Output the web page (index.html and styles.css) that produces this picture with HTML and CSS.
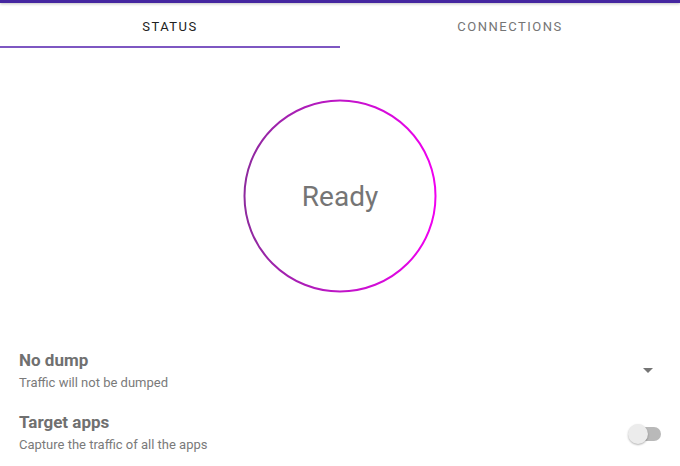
FILE: index.html
```html
<!DOCTYPE html>
<html lang="en">
<head>
    <meta charset="UTF-8">
    <meta name="viewport" content="width=device-width, initial-scale=1.0">
    <title>Status</title>
    <link rel="stylesheet" href="styles.css">
</head>
<body>
    <div class="topbar"></div>
    <nav class="tabs">
        <div class="tab active">STATUS</div>
        <div class="tab">CONNECTIONS</div>
    </nav>
    <main>
        <div class="status-area">
            <svg class="status-ring" width="194" height="194" viewBox="0 0 194 194">
                <defs>
                    <linearGradient id="ringGrad" x1="0" y1="0" x2="1" y2="0">
                        <stop offset="0" stop-color="#8e2a9e"/>
                        <stop offset="1" stop-color="#f000f0"/>
                    </linearGradient>
                </defs>
                <circle cx="97" cy="97" r="95.5" fill="none" stroke="url(#ringGrad)" stroke-width="2"/>
            </svg>
            <span class="status-text">Ready</span>
        </div>
        <div class="settings">
            <div class="setting">
                <div class="setting-text">
                    <div class="setting-title">No dump</div>
                    <div class="setting-sub">Traffic will not be dumped</div>
                </div>
                <span class="dropdown-arrow"></span>
            </div>
            <div class="setting">
                <div class="setting-text">
                    <div class="setting-title">Target apps</div>
                    <div class="setting-sub">Capture the traffic of all the apps</div>
                </div>
                <span class="switch"><span class="switch-thumb"></span></span>
            </div>
        </div>
    </main>
</body>
</html>
```

FILE: styles.css
```css
body {
    margin: 0;
    background-color: #ffffff;
    font-family: Roboto, "Liberation Sans", sans-serif;
    width: 680px;
    height: 466px;
    overflow: hidden;
}
.topbar {
    height: 3px;
    background-color: #4527a0;
    box-shadow: 0 1px 3px rgba(0, 0, 0, 0.25);
}
.tabs {
    display: flex;
    height: 45px;
}
.tab {
    flex: 1;
    display: flex;
    align-items: center;
    justify-content: center;
    font-size: 13px;
    font-weight: 400;
    letter-spacing: 1.5px;
    color: #757575;
    border-bottom: 2px solid transparent;
    padding-top: 4px;
    box-sizing: border-box;
}
.tab.active {
    color: #212121;
    border-bottom-color: #7e57c2;
}
main {
    display: flex;
    flex-direction: column;
}
.status-area {
    position: relative;
    display: flex;
    align-items: center;
    justify-content: center;
    height: 194px;
    margin-top: 51px;
}
.status-text {
    position: absolute;
    font-size: 28px;
    color: #757575;
    top: 81px;
}
.settings {
    display: flex;
    flex-direction: column;
    gap: 17px;
    padding: 0 19px;
    margin-top: 55px;
}
.setting {
    display: flex;
    align-items: center;
    justify-content: space-between;
}
.setting-title {
    font-size: 17px;
    font-weight: 700;
    color: #707070;
    line-height: 24px;
}
.setting-sub {
    font-size: 13px;
    color: #7a7a7a;
    line-height: 20px;
    padding-top: 1px;
}
.dropdown-arrow {
    width: 0;
    height: 0;
    border-left: 5px solid transparent;
    border-right: 5px solid transparent;
    border-top: 5px solid #757575;
    margin-right: 8px;
}
.switch {
    position: relative;
    width: 24px;
    height: 14px;
    border-radius: 7px;
    background-color: #b9b9b9;
    margin-top: 2px;
}
.switch-thumb {
    position: absolute;
    left: -9px;
    top: -3px;
    width: 20px;
    height: 20px;
    border-radius: 50%;
    background-color: #ececec;
    box-shadow: 0 1px 2px rgba(0, 0, 0, 0.3);
}
```
